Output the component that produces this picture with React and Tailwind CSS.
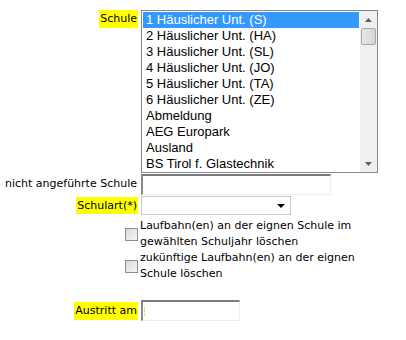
import React from "react";

const items = [
  "1 Häuslicher Unt. (S)",
  "2 Häuslicher Unt. (HA)",
  "3 Häuslicher Unt. (SL)",
  "4 Häuslicher Unt. (JO)",
  "5 Häuslicher Unt. (TA)",
  "6 Häuslicher Unt. (ZE)",
  "Abmeldung",
  "AEG Europark",
  "Ausland",
  "BS Tirol f. Glastechnik",
];

const label = "font-['Tahoma','DejaVu_Sans',sans-serif] text-[11px] text-black whitespace-nowrap";

const Check = () => (
  <span className="w-[13px] h-[13px] border border-[#8e8f8f] bg-gradient-to-br from-[#dcdcdc] to-[#f4f4f4]" />
);

const App = () => {
  return (
    <div className="w-[406px] h-[340px] bg-white pt-[10px] font-['Liberation_Sans',Arial,sans-serif]">
      <div className="grid grid-cols-[138px_1fr] gap-x-[3px]">
        {/* Schule */}
        <div className={`flex justify-end items-start ${label}`}>
          <span className="bg-[#ffff00] leading-[18px] px-px">Schule</span>
        </div>
        <div className="flex w-[237px] h-[163px] border border-[#828790] bg-white">
          <ul className="flex-1 p-px text-[13px] text-black">
            {items.map((t, i) => (
              <li
                key={t}
                className={
                  "h-4 leading-4 px-[3px] whitespace-nowrap " +
                  (i === 0 ? "bg-[#3399ff] text-white" : "")
                }
              >
                {t}
              </li>
            ))}
          </ul>
          <div className="w-[17px] bg-[#f0f0f0] flex flex-col items-center">
            <div className="h-[17px] flex items-center justify-center">
              <svg width="7" height="4" viewBox="0 0 7 4">
                <path d="M3.5 0 L7 4 L0 4 Z" fill="#606060" />
              </svg>
            </div>
            <div className="w-[15px] h-[17px] border border-[#a7a7a7] rounded-[2px] bg-gradient-to-r from-[#e8e8e8] to-[#d6d6d6]" />
            <div className="flex-1" />
            <div className="h-[17px] flex items-center justify-center">
              <svg width="7" height="4" viewBox="0 0 7 4">
                <path d="M0 0 L7 0 L3.5 4 Z" fill="#606060" />
              </svg>
            </div>
          </div>
        </div>

        {/* nicht angeführte Schule */}
        <div className={`flex justify-end items-center ${label}`}>
          <span className="pr-px">nicht angeführte Schule</span>
        </div>
        <div className="pt-px">
          <div className="w-[190px] h-[21px] border-t-2 border-l-2 border-r border-b border-t-[#7a7a7a] border-l-[#8a8a8a] border-r-[#ececec] border-b-[#ececec] bg-white" />
        </div>

        {/* Schulart */}
        <div className={`flex justify-end items-center ${label}`}>
          <span className="bg-[#ffff00] leading-[17px] px-px">Schulart(*)</span>
        </div>
        <div className="pt-px">
          <div className="w-[150px] h-[19px] border border-[#c8c8c8] bg-white flex items-center justify-end pr-[5px]">
            <svg width="8" height="4" viewBox="0 0 8 4">
              <path d="M0 0 L8 0 L4 4 Z" fill="#000" />
            </svg>
          </div>
        </div>

        {/* Checkboxes */}
        <div className="flex justify-end items-center mt-[3px]">
          <Check />
        </div>
        <div className={`${label} leading-4 -ml-px mt-[3px]`}>
          Laufbahn(en) an der eignen Schule im
          <br />
          gewählten Schuljahr löschen
        </div>
        <div className="flex justify-end items-center">
          <Check />
        </div>
        <div className={`${label} leading-4 -ml-px`}>
          zukünftige Laufbahn(en) an der eignen
          <br />
          Schule löschen
        </div>

        {/* Austritt am */}
        <div className={`flex justify-end items-center mt-[18px] ${label}`}>
          <span className="bg-[#ffff00] leading-[18px] px-px">Austritt am</span>
        </div>
        <div className="mt-[18px]">
          <div className="w-[99px] h-[21px] border-t-2 border-l-2 border-r border-b border-t-[#7a7a7a] border-l-[#8a8a8a] border-r-[#ececec] border-b-[#ececec] bg-white flex items-center pl-px">
            <span className="w-px h-[9px] border-l border-dotted border-[#f0b030]" />
          </div>
        </div>
      </div>
    </div>
  );
};

export default App;
